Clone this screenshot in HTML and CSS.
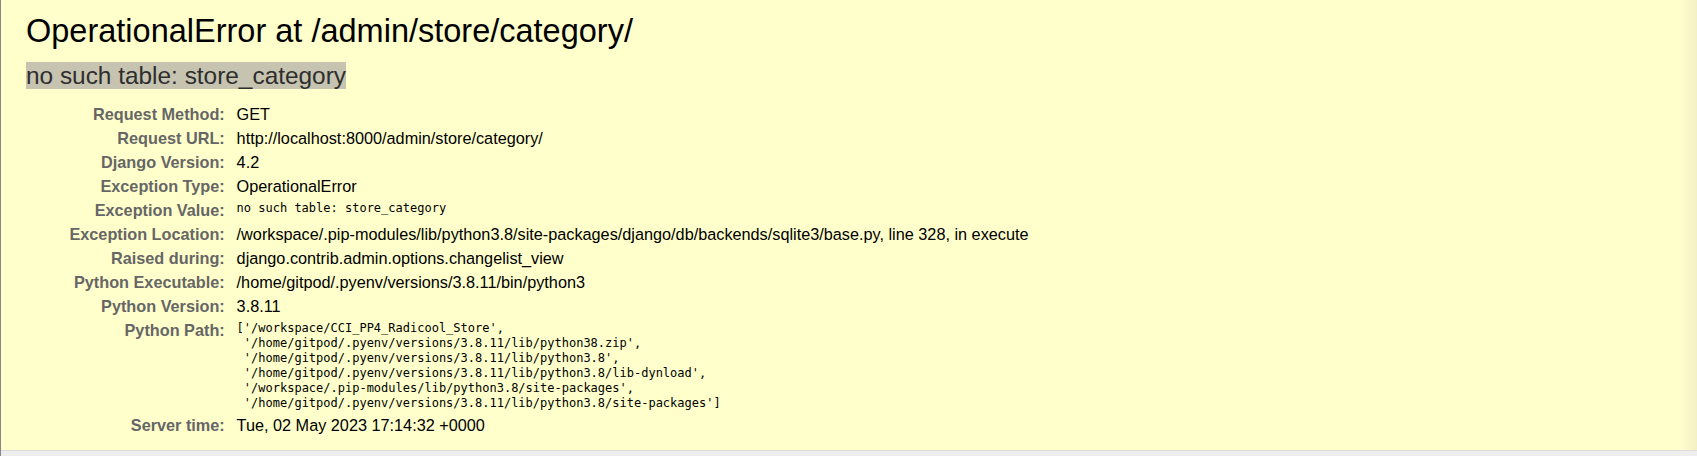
FILE: index.html
```html
<!DOCTYPE html>
<html lang="en">
<head>
<meta charset="utf-8">
<title>OperationalError at /admin/store/category/</title>
<link rel="stylesheet" href="styles.css">
</head>
<body>
<div class="summary">
  <h1 class="title">OperationalError at /admin/store/category/</h1>
  <pre class="exception-value"><span class="hl">no such table: store_category</span></pre>
  <table class="meta">
    <tbody>
      <tr><th>Request Method:</th><td>GET</td></tr>
      <tr><th>Request URL:</th><td>http://localhost:8000/admin/store/category/</td></tr>
      <tr><th>Django Version:</th><td>4.2</td></tr>
      <tr><th>Exception Type:</th><td>OperationalError</td></tr>
      <tr><th>Exception Value:</th><td><pre class="mono">no such table: store_category</pre></td></tr>
      <tr><th>Exception Location:</th><td>/workspace/.pip-modules/lib/python3.8/site-packages/django/db/backends/sqlite3/base.py, line 328, in execute</td></tr>
      <tr><th>Raised during:</th><td>django.contrib.admin.options.changelist_view</td></tr>
      <tr><th>Python Executable:</th><td>/home/gitpod/.pyenv/versions/3.8.11/bin/python3</td></tr>
      <tr><th>Python Version:</th><td>3.8.11</td></tr>
      <tr><th>Python Path:</th><td><pre class="mono">['/workspace/CCI_PP4_Radicool_Store',
 '/home/gitpod/.pyenv/versions/3.8.11/lib/python38.zip',
 '/home/gitpod/.pyenv/versions/3.8.11/lib/python3.8',
 '/home/gitpod/.pyenv/versions/3.8.11/lib/python3.8/lib-dynload',
 '/workspace/.pip-modules/lib/python3.8/site-packages',
 '/home/gitpod/.pyenv/versions/3.8.11/lib/python3.8/site-packages']</pre></td></tr>
      <tr><th>Server time:</th><td>Tue, 02 May 2023 17:14:32 +0000</td></tr>
    </tbody>
  </table>
</div>
<div class="traceback"></div>
</body>
</html>
```
FILE: styles.css
```css
* {
  margin: 0;
  padding: 0;
}

html,
body {
  height: 100%;
}

body {
  font: 16.25px "Liberation Sans", Arial, sans-serif;
  color: #000;
  background: #fff;
  border-left: 1px solid #888;
  display: flex;
  flex-direction: column;
  overflow: hidden;
}

.summary {
  background: linear-gradient(to right, #ffc calc(100% - 18px), #f3f0c6);
  padding: 12.5px 25px;
  border-bottom: 1px solid #ddd;
}

.traceback {
  background: #eee;
  flex: 1;
}

.title {
  font-size: 32.5px;
  font-weight: normal;
}

.exception-value {
  font-family: "Liberation Sans", Arial, sans-serif;
  font-size: 24.4px;
  color: #575757;
  margin: 12.5px 0;
  white-space: pre-wrap;
}

.exception-value .hl {
  background: #c6c4b0;
  color: #2e2e2e;
}

.meta {
  border-collapse: collapse;
  border: none;
  width: 100%;
}

.meta th {
  width: 195px;
  text-align: right;
  color: #666;
  vertical-align: top;
  padding: 2.5px 8.1px 2.5px 3.75px;
  font-weight: bold;
}

.meta td {
  vertical-align: top;
  padding: 2.5px 3.75px;
}

.mono {
  font-family: "DejaVu Sans Mono", monospace;
  font-size: 12px;
  line-height: 15px;
  white-space: pre-wrap;
}
```
